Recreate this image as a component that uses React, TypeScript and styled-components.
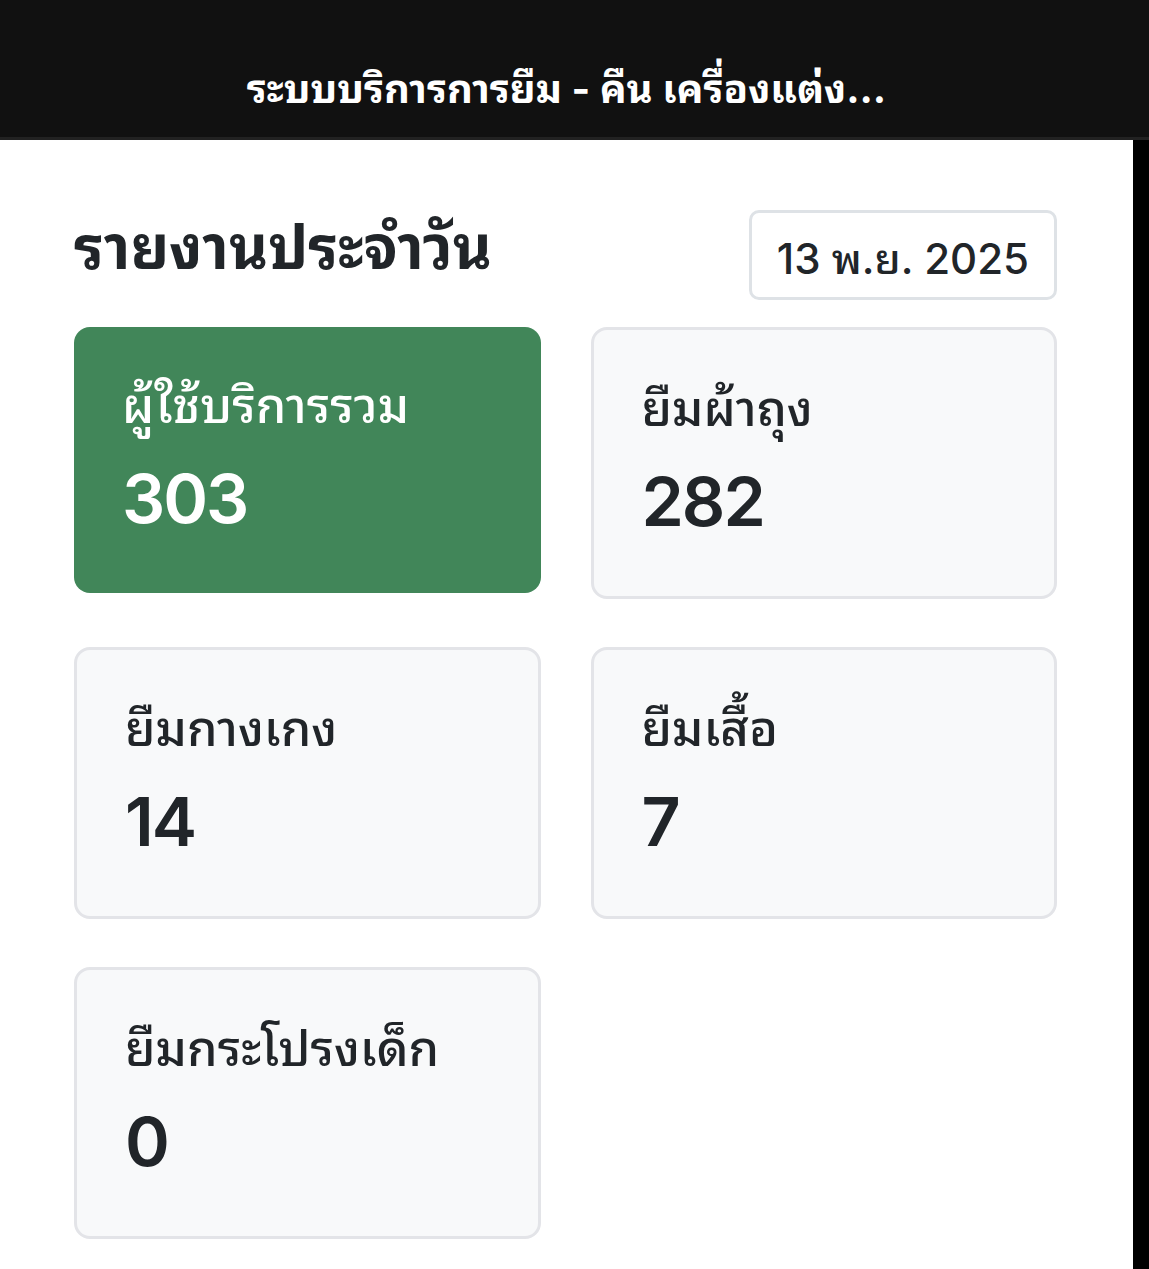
import styled, { createGlobalStyle } from "styled-components";

const GlobalStyle = createGlobalStyle`
  html, body {
    margin: 0;
    padding: 0;
    background: #fff;
  }
  body {
    font-family: Inter, "Noto Sans Thai Looped", "Noto Sans Thai", sans-serif;
    color: #212529;
  }
`;

const Header = styled.header`
  height: 140px;
  box-sizing: border-box;
  background: #111111;
  border-bottom: 3px solid #222222;
  display: flex;
  align-items: center;
  justify-content: center;
  padding: 32px 16px 0 0;
`;

const HeaderTitle = styled.h1`
  margin: 0;
  color: #fff;
  font-size: 40px;
  font-weight: 700;
  white-space: nowrap;
`;

const Body = styled.div`
  display: flex;
  min-height: 1129px;
`;

const Main = styled.main`
  flex: 1;
  background: #fff;
  padding: 70px 76px 28px 74px;
`;

const Strip = styled.div`
  width: 16px;
  background: #000;
`;

const TopRow = styled.div`
  display: flex;
  justify-content: space-between;
  align-items: center;
  margin-bottom: 27px;
`;

const PageTitle = styled.h2`
  margin: 0;
  padding-bottom: 16px;
  font-size: 60px;
  font-weight: 700;
  line-height: 1.2;
`;

const DateBox = styled.div`
  border: 3px solid #dee2e6;
  border-radius: 10px;
  height: 84px;
  padding: 0 25px;
  display: flex;
  align-items: center;
  font-size: 42px;
  font-weight: 500;
`;

const Grid = styled.div`
  display: grid;
  grid-template-columns: 1fr 1fr;
  column-gap: 50px;
  row-gap: 48px;
  align-items: start;
`;

const Card = styled.div<{ $primary?: boolean }>`
  border-radius: 16px;
  padding: 44px 48px 54px;
  background: ${(p) => (p.$primary ? "#418659" : "#f8f9fa")};
  color: ${(p) => (p.$primary ? "#fff" : "#212529")};
  border: ${(p) => (p.$primary ? "none" : "3px solid #e3e4e8")};
`;

const Label = styled.div`
  font-size: 49px;
  font-weight: 500;
  line-height: 70px;
`;

const Value = styled.div`
  font-size: 68px;
  font-weight: 600;
  line-height: 82px;
  letter-spacing: -2px;
  margin-top: 16px;
`;

const stats = [
  { label: "ผู้ใช้บริการรวม", value: 303, primary: true },
  { label: "ยืมผ้าถุง", value: 282 },
  { label: "ยืมกางเกง", value: 14 },
  { label: "ยืมเสื้อ", value: 7 },
  { label: "ยืมกระโปรงเด็ก", value: 0 },
];

export default function App() {
  return (
    <>
      <GlobalStyle />
      <Header>
        <HeaderTitle>ระบบบริการการยืม - คืน เครื่องแต่ง...</HeaderTitle>
      </Header>
      <Body>
        <Main>
          <TopRow>
            <PageTitle>รายงานประจำวัน</PageTitle>
            <DateBox>13 พ.ย. 2025</DateBox>
          </TopRow>
          <Grid>
            {stats.map((s) => (
              <Card key={s.label} $primary={s.primary}>
                <Label>{s.label}</Label>
                <Value>{s.value}</Value>
              </Card>
            ))}
          </Grid>
        </Main>
        <Strip />
      </Body>
    </>
  );
}
